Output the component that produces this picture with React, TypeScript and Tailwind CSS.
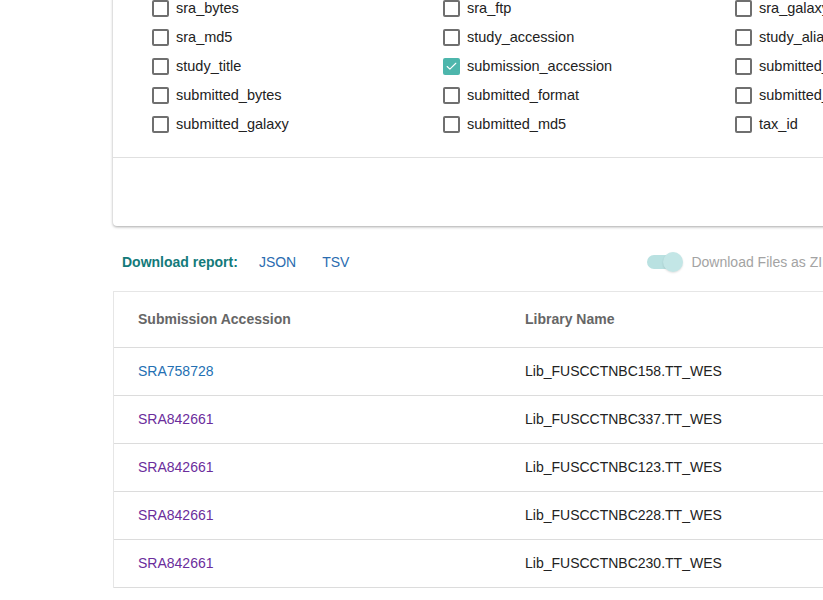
import { Check } from "lucide-react";

const fields = [
  ["sra_bytes", "sra_ftp", "sra_galaxy"],
  ["sra_md5", "study_accession", "study_alias"],
  ["study_title", "submission_accession", "submitted_aspera"],
  ["submitted_bytes", "submitted_format", "submitted_ftp"],
  ["submitted_galaxy", "submitted_md5", "tax_id"],
];

const checked = new Set(["submission_accession"]);

const rows = [
  { acc: "SRA758728", lib: "Lib_FUSCCTNBC158.TT_WES", visited: false },
  { acc: "SRA842661", lib: "Lib_FUSCCTNBC337.TT_WES", visited: true },
  { acc: "SRA842661", lib: "Lib_FUSCCTNBC123.TT_WES", visited: true },
  { acc: "SRA842661", lib: "Lib_FUSCCTNBC228.TT_WES", visited: true },
  { acc: "SRA842661", lib: "Lib_FUSCCTNBC230.TT_WES", visited: true },
];

const Box = ({ on }: { on: boolean }) =>
  on ? (
    <span className="flex items-center justify-center w-[17px] h-[17px] rounded-[2px] bg-[#4db6ac] shrink-0">
      <Check className="w-[13px] h-[13px] text-white" strokeWidth={2} />
    </span>
  ) : (
    <span className="w-[17px] h-[17px] rounded-[2px] border-2 border-[#6f6f6f] shrink-0" />
  );

export default function App() {
  return (
    <div
      className="w-[823px] h-[600px] overflow-hidden bg-white pl-[113px]"
      style={{ fontFamily: '"Liberation Sans", Arial, sans-serif' }}
    >
      <div className="w-[1100px]">
        <div className="-mt-[20px] bg-white rounded-b-[4px] shadow-[0_1px_3px_rgba(0,0,0,0.35)]">
          <div className="pt-[14px] pb-[18px] pl-[39px] grid grid-cols-[291px_292px_291px]">
            {fields.flat().map((f) => (
              <label key={f} className="flex items-center gap-[7px] h-[29px] text-[14.5px] text-[#222]">
                <Box on={checked.has(f)} />
                <span>{f}</span>
              </label>
            ))}
          </div>
          <div className="border-t border-[#e0e0e0] h-[69px]" />
        </div>

        <div className="flex items-center h-[65px] pt-[7px] pl-[9px]">
          <span className="text-[14px] font-bold text-[#137a7a]">Download report:</span>
          <a className="ml-[21px] text-[14px] text-[#2b6cb0]">JSON</a>
          <a className="ml-[26px] text-[14px] text-[#2b6cb0]">TSV</a>
          <span className="ml-[298px] relative w-[36px] h-[20px] flex items-center">
            <span className="w-[32px] h-[14px] rounded-full bg-[#b9e1e1]" />
            <span className="absolute right-0 w-[20px] h-[20px] rounded-full bg-[#c3e6e6] shadow-[0_1px_2px_rgba(0,0,0,0.12)]" />
          </span>
          <span className="ml-[8px] text-[14px] text-[#a3a3a3]">Download Files as ZIP</span>
        </div>

        <div className="border-l border-t border-[#e6e6e6]">
          <div className="flex h-[56px] items-center border-b border-[#dcdcdc] text-[14px] font-bold text-[#666]">
            <div className="w-[387px] pl-[24px]">Submission Accession</div>
            <div className="pl-[24px]">Library Name</div>
          </div>
          {rows.map((r, i) => (
            <div key={i} className="flex h-[48px] items-center border-b border-[#dcdcdc] text-[14px]">
              <div className="w-[387px] pl-[24px]">
                <a className={r.visited ? "text-[#6b2d9c]" : "text-[#2470b3]"}>{r.acc}</a>
              </div>
              <div className="pl-[24px] text-[#222]">{r.lib}</div>
            </div>
          ))}
        </div>
      </div>
    </div>
  );
}
